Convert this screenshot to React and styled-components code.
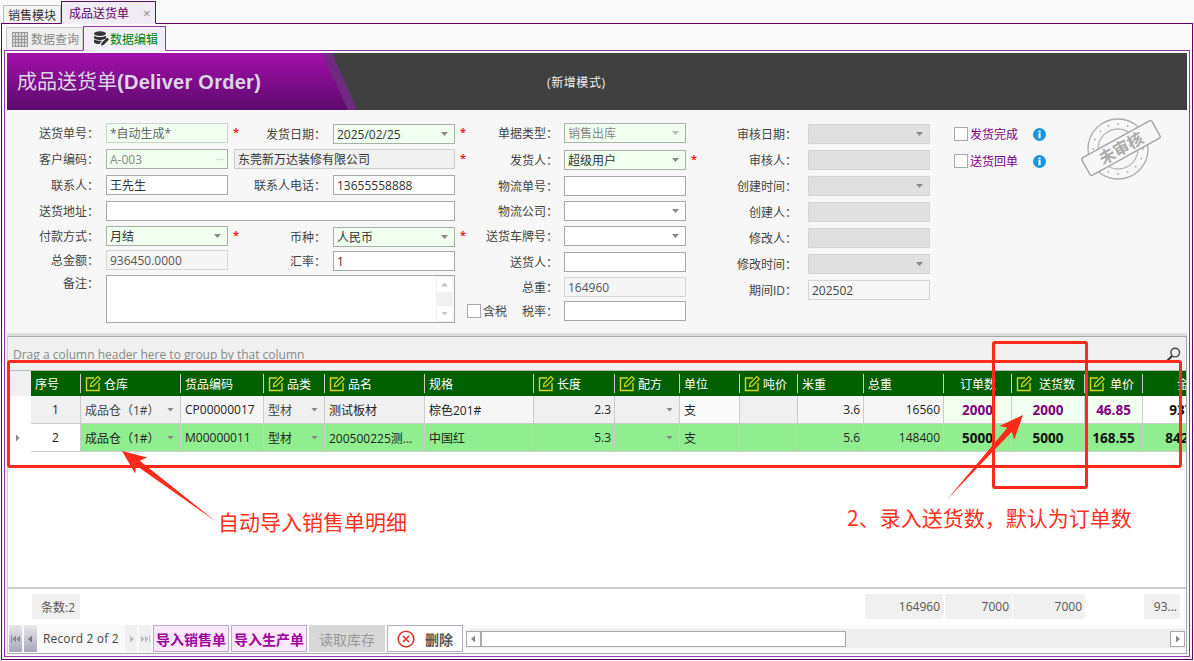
import React from "react";
import styled, { createGlobalStyle, css } from "styled-components";

const FONT = `"Open Sans", "Noto Sans CJK SC", sans-serif`;

const Global = createGlobalStyle`
  html, body { margin: 0; padding: 0; background: #fafafa; }
  body { font-family: ${FONT}; font-size: 12px; color: #333; }
  * { box-sizing: border-box; }
`;

const Page = styled.div`
  position: relative;
  width: 1194px;
  height: 661px;
  overflow: hidden;
  display: flex;
  flex-direction: column;
  background: #fafafa;
`;

const TabStrip = styled.div`
  height: 23px;
  padding-left: 3px;
  display: flex;
  align-items: flex-end;
`;
const TopTab = styled.div`
  height: ${(p) => (p.$active ? 23 : 18)}px;
  width: ${(p) => (p.$active ? 95 : 58)}px;
  padding-left: ${(p) => (p.$active ? 7 : 4)}px;
  display: flex;
  align-items: center;
  color: ${(p) => (p.$active ? "#660066" : "#333")};
  background: ${(p) => (p.$active ? "#f0ecf3" : "#f4f4f4")};
  border: 1px solid ${(p) => (p.$active ? "#5f0f6f" : "#bbb")};
  border-bottom: ${(p) => (p.$active ? "1px solid #f0ecf3" : "0")};
  margin-bottom: ${(p) => (p.$active ? -1 : 0)}px;
  z-index: 1;
`;
const TabClose = styled.span`
  margin-left: 14px;
  color: #888;
  font-size: 13px;
`;
const Outer = styled.div`
  flex: 1;
  margin: 0 1px 1px 1px;
  border: 1px solid #660066;
  padding: 2px 0 2px 0;
  display: flex;
  flex-direction: column;
  min-height: 0;
`;
const SubTabs = styled.div`
  height: 24px;
  padding-left: 2px;
  display: flex;
  align-items: flex-end;
  margin: 0 2px;
`;
const SubTab = styled.div`
  height: ${(p) => (p.$active ? 25 : 23)}px;
  width: ${(p) => (p.$active ? 83 : 77)}px;
  display: flex;
  align-items: center;
  gap: ${(p) => (p.$active ? 1 : 3)}px;
  padding-left: ${(p) => (p.$active ? 9 : 5)}px;
  color: ${(p) => (p.$active ? "#008000" : "#888")};
  background: ${(p) => (p.$active ? "#f2eef6" : "#f0f0f0")};
  border: 1px solid ${(p) => (p.$active ? "#9932b0" : "#ccc")};
  border-bottom: ${(p) => (p.$active ? "1px solid #f2eef6" : "0")};
  margin-bottom: ${(p) => (p.$active ? -1 : 0)}px;
  z-index: 1;
`;
const Inner = styled.div`
  flex: 1;
  margin: 0 2px;
  border: 1px solid #9932b0;
  padding: 2px 2px 2px 2px;
  display: flex;
  flex-direction: column;
  min-height: 0;
`;

const Banner = styled.div`
  height: 57px;
  flex: none;
  background: #404040;
  display: flex;
  align-items: center;
  color: #fff;
`;
const BannerLeft = styled.div`
  position: relative;
  width: 350px;
  height: 100%;
  background: #6e2a80;
  clip-path: polygon(0 0, 325px 0, 350px 100%, 0 100%);
  display: flex;
  align-items: center;
  padding: 0 0 2px 10px;
  &::before {
    content: "";
    position: absolute;
    inset: 0;
    background: linear-gradient(#a30fab, #5c0a6c);
    clip-path: polygon(0 0, 315px 0, 341px 100%, 0 100%);
  }
`;
const BannerTitle = styled.div`
  position: relative;
  color: #dcd6e4;
  font-size: 20px;
  font-weight: 700;
  letter-spacing: 0.27px;
  font-family: "Liberation Sans", "Noto Sans CJK SC", sans-serif;
  white-space: nowrap;
  & > span { font-weight: 400; letter-spacing: 0; }
`;
const BannerMode = styled.div`
  margin-left: 190px;
  font-size: 12px;
  letter-spacing: 0.6px;
  color: #f0f0f0;
`;

const Form = styled.div`
  height: 223px;
  flex: none;
  padding-top: 13px;
  background: #f7f7f7;
  display: flex;
  align-items: flex-start;
`;
const Fields = styled.div`
  display: grid;
  grid-template-columns: ${(p) => p.$cols};
  grid-template-rows: ${(p) => p.$rows};
  margin-top: ${(p) => p.$top || 0}px;
`;
const Label = styled.div`
  height: 20px;
  display: flex;
  align-items: center;
  justify-content: flex-end;
  padding-right: ${(p) => p.$pad ?? 7}px;
  margin-top: ${(p) => p.$dy || 0}px;
  color: #444;
  white-space: nowrap;
`;
const inputVariants = {
  req: css`background: #f0fff0; border-color: #a8b0a8; color: #333;`,
  reqLight: css`background: #f0fff0; border-color: #ccd4cc; color: #666;`,
  reqMuted: css`background: #f0fff0; border-color: #a8b0a8; color: #888;`,
  plain: css`background: #fff; border-color: #a8a8a8; color: #333;`,
  read: css`background: #f5f5f5; border-color: #d4d4d4; color: #555;`,
  name: css`background: #f0f0f0; border-color: #ccc; color: #333;`,
  off: css`background: #e0e0e0; border-color: #d4d4d4; color: #999;`,
  period: css`background: #f7f7f7; border-color: #d4d4d4; color: #444;`,
};
const Input = styled.div`
  height: ${(p) => p.$h || 20}px;
  margin-top: ${(p) => p.$dy || 0}px;
  margin-left: ${(p) => p.$ml || 0}px;
  grid-column: ${(p) => p.$span || "auto"};
  border: 1px solid;
  ${(p) => inputVariants[p.$v || "plain"]}
  padding: 0 3px;
  display: flex;
  align-items: center;
  justify-content: space-between;
  white-space: nowrap;
  overflow: hidden;
`;
const Caret = styled.i`
  width: 7px;
  height: 4px;
  flex: none;
  margin-right: 3px;
  background: ${(p) => (p.$light ? "#bbb" : "#888")};
  clip-path: polygon(0 0, 100% 0, 50% 100%);
`;
const Dots = styled.span`
  color: #bbb;
  font-size: 10px;
  line-height: 1;
`;
const Star = styled.div`
  height: 20px;
  margin-top: ${(p) => p.$dy || 0}px;
  padding-left: 5px;
  color: #ff2020;
  font-weight: 700;
  font-size: 11px;
  line-height: 17px;
`;
const Memo = styled(Input)`
  padding: 0;
  justify-content: flex-end;
  align-items: stretch;
`;
const MemoBar = styled.div`
  width: 17px;
  margin-right: 1px;
  background: #f0f0f0;
  display: flex;
  flex-direction: column;
  justify-content: space-between;
  padding: 1px;
`;
const MemoBtn = styled.div`
  height: 15px;
  background: #fff;
  display: flex;
  align-items: center;
  justify-content: center;
  & > i {
    width: 7px;
    height: 4px;
    background: #c4c4c4;
    clip-path: ${(p) => (p.$up ? "polygon(50% 0, 100% 100%, 0 100%)" : "polygon(0 0, 100% 0, 50% 100%)")};
  }
`;
const TaxCell = styled.div`
  display: flex;
  align-items: center;
  height: 20px;
  padding: 0 6px 0 1px;
  color: #444;
  white-space: nowrap;
`;
const Check = styled.span`
  display: inline-block;
  flex: none;
  width: 14px;
  height: 14px;
  background: #fff;
  border: 1px solid #aaa;
  margin-right: 2px;
`;
const TaxRate = styled.span`
  margin-left: auto;
`;
const Flags = styled.div`
  width: 126px;
  margin-left: 24px;
  padding-top: 3px;
  display: flex;
  flex-direction: column;
`;
const Flag = styled.div`
  height: 27px;
  padding-top: 1px;
  display: flex;
  align-items: flex-start;
  color: #800080;
  line-height: 16px;
  & > svg { margin-left: 15px; margin-top: 1px; }
`;
const StampBox = styled.div`
  margin-top: -6px;
`;

const Splitter = styled.div`
  height: 3px;
  flex: none;
  background: #dcdcdc;
`;
const GridPanel = styled.div`
  flex: 1;
  min-height: 0;
  border: 1px solid #aaa;
  border-left-color: #ccc;
  background: #fff;
  display: flex;
  flex-direction: column;
  overflow: hidden;
`;
const GroupPanel = styled.div`
  height: 34px;
  flex: none;
  background: #f0f0f0;
  border-bottom: 1px solid #bbb;
  padding: 1px 5px 0 5px;
  display: flex;
  align-items: center;
  justify-content: space-between;
  color: #888;
`;
const COLS = "23px 50px 100px 83px 61px 100px 109px 81px 65px 60px 58px 66px 80px 68px 73px 58px 92px";
const GridRow = styled.div`
  display: grid;
  grid-template-columns: ${COLS};
  height: ${(p) => p.$h}px;
  flex: none;
`;
const Corner = styled.div`
  background: #f0f0f0;
`;
const HeadCell = styled.div`
  background: #006000 linear-gradient(#ccc, #ccc) right center / 1px 19px no-repeat;
  color: #fff;
  display: flex;
  align-items: center;
  justify-content: ${(p) => p.$align || "flex-start"};
  gap: ${(p) => p.$gap ?? 2}px;
  padding: 0 4px;
  white-space: nowrap;
`;
const Cell = styled.div`
  background: ${(p) => p.$bg};
  border-right: 1px solid #ccc;
  border-bottom: 1px solid #ccc;
  color: ${(p) => p.$color || "#222"};
  font-size: ${(p) => (p.$strong ? 13.5 : 12)}px;
  font-weight: ${(p) => (p.$strong ? 700 : 400)};
  display: flex;
  align-items: center;
  justify-content: ${(p) => p.$align || "flex-start"};
  padding: 0 ${(p) => (p.$align === "flex-end" ? 3 : 4)}px 0 4px;
  min-width: 0;
  white-space: nowrap;
`;
const CellCaret = styled(Caret)`
  margin-left: auto;
  margin-right: 2px;
`;
const Indicator = styled.div`
  display: flex;
  align-items: center;
  justify-content: center;
  padding-right: 4px;
  & > i {
    width: 4px;
    height: 8px;
    background: #888;
    clip-path: polygon(0 0, 100% 50%, 0 100%);
  }
`;
const GridBody = styled.div`
  flex: 1;
  background: #fff;
`;
const Summary = styled.div`
  height: 38px;
  flex: none;
  border-top: 2px solid #ccc;
  padding-top: 5px;
  display: grid;
  grid-template-columns: 23px 50px 100px 83px 61px 100px 109px 81px 65px 60px 58px 66px 80px 68px 73px 58px 37px;
`;
const SumCell = styled.div`
  height: 25px;
  margin-left: ${(p) => p.$ml ?? 1}px;
  margin-right: ${(p) => p.$mr ?? 1}px;
  background: ${(p) => (p.$on ? "#f0f0f0" : "transparent")};
  color: #555;
  display: flex;
  align-items: center;
  justify-content: ${(p) => (p.$left ? "flex-start" : "flex-end")};
  padding: 0 3px 0 9px;
`;
const Nav = styled.div`
  height: 28px;
  flex: none;
  display: flex;
  align-items: stretch;
  padding: 0 0 1px 1px;
  background: #fafafa;
`;
const NavBtn = styled.div`
  width: ${(p) => (p.$on ? 13 : 12)}px;
  margin-right: 2px;
  background: ${(p) => (p.$on ? "linear-gradient(#e8e8ec, #a8a6bc)" : "#f0f0f0")};
  display: flex;
  align-items: center;
  justify-content: center;
`;
const NavText = styled.div`
  width: 86px;
  padding-left: 4px;
  display: flex;
  align-items: center;
  color: #444;
  letter-spacing: 0.15px;
  white-space: nowrap;
`;
const ActionBtn = styled.div`
  width: 76px;
  margin-right: 2px;
  border: 1px solid ${(p) => (p.$kind === "off" ? "#d8d8d8" : "#b4aecc")};
  background: ${(p) => (p.$kind === "off" ? "#d8d8d8" : p.$kind === "del" ? "#fff" : "#fbe8fb")};
  color: ${(p) => (p.$kind === "off" ? "#999" : p.$kind === "del" ? "#555" : "#a000a0")};
  font-size: 14px;
  font-weight: ${(p) => (p.$kind === "off" ? 400 : 700)};
  display: flex;
  align-items: center;
  justify-content: center;
  gap: 10px;
  white-space: nowrap;
`;
const ScrollBar = styled.div`
  flex: 1;
  margin: 4px 1px 4px 1px;
  background: #eee;
  display: flex;
  align-items: center;
  justify-content: space-between;
`;
const ScrollBtn = styled.div`
  width: 15px;
  height: 16px;
  background: #fff;
  border: 1px solid #aaa;
  display: flex;
  align-items: center;
  justify-content: center;
`;
const ScrollThumb = styled.div`
  width: 365px;
  height: 16px;
  background: #fff;
  border: 1px solid #aaa;
  margin-right: auto;
`;

const RedBox = styled.div`
  position: absolute;
  left: ${(p) => p.$x}px;
  top: ${(p) => p.$y}px;
  width: ${(p) => p.$w}px;
  height: ${(p) => p.$h}px;
  border: 3px solid #ff2a1a;
  border-radius: 3px;
`;
const ArrowLayer = styled.svg`
  position: absolute;
  inset: 0;
  pointer-events: none;
`;
const Note = styled.div`
  position: absolute;
  left: ${(p) => p.$x}px;
  top: ${(p) => p.$y}px;
  color: #ff3020;
  font-size: 21px;
  line-height: 28px;
  white-space: nowrap;
  font-family: "Noto Sans CJK SC", sans-serif;
`;

const Tri = ({ dir = "r", color = "#888", bar }) => (
  <svg width="9" height="8" viewBox="0 0 9 8">
    {bar && <rect x={dir === "l" ? 0 : 8} y="0.5" width="1" height="7" fill={color} />}
    <path d={dir === "l" ? "M6 0.5V7.5L2 4z" : "M3 0.5V7.5L7 4z"} fill={color} />
  </svg>
);
const DoubleTri = ({ dir, color }) => (
  <svg width="10" height="8" viewBox="0 0 10 8">
    {dir === "l" ? (
      <path d="M0 0.5h1v7H0zM5 0.5V7.5L1.5 4zM9 0.5V7.5L5.5 4z" fill={color} />
    ) : (
      <path d="M1 0.5V7.5L4.5 4zM5 0.5V7.5L8.5 4zM9 0.5h1v7H9z" fill={color} />
    )}
  </svg>
);

const EditIcon = () => (
  <svg width="17" height="17" viewBox="0 0 17 17" fill="none" style={{ flex: "none" }}>
    <path d="M9 3H1.5V15.5H14V8" stroke="#d6d61e" strokeWidth="1.4" />
    <path d="M5.5 11.5L6 8.5L12.8 1.7L15.2 4.1L8.4 10.9Z" stroke="#d6d61e" strokeWidth="1.2" fill="#006000" />
  </svg>
);
const TableIcon = () => (
  <svg width="16" height="15" viewBox="0 0 16 15">
    <rect x="0.5" y="0.5" width="15" height="14" fill="#d8d8d8" stroke="#999" />
    <path d="M0.5 4.5h15M0.5 7.5h15M0.5 10.5h15M3.5 1v13M6.5 1v13M9.5 1v13M12.5 1v13" stroke="#999" fill="none" />
  </svg>
);
const DbIcon = () => (
  <svg width="16" height="16" viewBox="0 0 16 16">
    <ellipse cx="7" cy="2.6" rx="6" ry="2.4" fill="#333" />
    <path d="M1 4v2.5C1 8 3.7 9 7 9s6-1 6-2.5V4C13 5.4 10.3 6 7 6S1 5.4 1 4z" fill="#333" />
    <path d="M1 8.3v2.4C1 12.2 3.7 13 6.5 13l2.5-3.6C5.5 10 2 9.6 1 8.3z" fill="#333" />
    <path d="M8 14.5l.5-2.6L14 6.5l2 2-5.5 5.4z" fill="#333" />
  </svg>
);
const InfoIcon = () => (
  <svg width="13" height="13" viewBox="0 0 13 13">
    <circle cx="6.5" cy="6.5" r="6.5" fill="#1a96e0" />
    <rect x="5.4" y="5.2" width="2.2" height="5" fill="#fff" />
    <rect x="5.4" y="2.6" width="2.2" height="1.8" fill="#fff" />
  </svg>
);
const SearchIcon = () => (
  <svg width="15" height="15" viewBox="0 0 15 15" fill="none">
    <circle cx="9.2" cy="5.6" r="4.3" stroke="#444" strokeWidth="1.4" />
    <path d="M6 9L1 14" stroke="#333" strokeWidth="2" />
  </svg>
);
const DeleteIcon = () => (
  <svg width="18" height="18" viewBox="0 0 18 18" fill="none" style={{ flex: "none" }}>
    <circle cx="9" cy="9" r="7.8" stroke="#e0342a" strokeWidth="1.6" fill="#fff" />
    <path d="M6 6l6 6M12 6l-6 6" stroke="#e0342a" strokeWidth="1.6" />
  </svg>
);
const Stamp = () => {
  const dots = [];
  for (let i = 0; i < 16; i++) {
    const a = (i / 16) * Math.PI * 2;
    dots.push(<circle key={i} cx={38 + 25 * Math.cos(a)} cy={32 + 25 * Math.sin(a)} r="0.9" fill="#a8a8a8" />);
  }
  return (
    <svg width="82" height="64" viewBox="0 0 82 64" fill="none">
      <circle cx="38" cy="32" r="30" stroke="#adadad" strokeWidth="1.3" />
      <circle cx="38" cy="32" r="20" stroke="#b8b8b8" strokeWidth="1.3" />
      {dots}
      <g transform="rotate(-29 41 31)">
        <rect x="1" y="21" width="80" height="20" rx="2" fill="#f7f7f7" stroke="#a4a4a4" strokeWidth="1.4" />
        <text x="41" y="37" textAnchor="middle" fontSize="16" fontWeight="700" fill="#aaa" fontFamily="Noto Sans CJK SC, sans-serif">未审核</text>
      </g>
    </svg>
  );
};

const Arrow = ({ x1, y1, x2, y2 }) => {
  const len = Math.hypot(x2 - x1, y2 - y1);
  const ux = (x2 - x1) / len;
  const uy = (y2 - y1) / len;
  const nx = -uy;
  const ny = ux;
  const at = (d, w) => `${x2 - ux * d + nx * w},${y2 - uy * d + ny * w}`;
  const pts = [at(0, 0), at(24, 10), at(20, 3), at(len, 0.3), at(20, -3), at(24, -10)].join(" ");
  return <polygon points={pts} fill="#ff2a1a" />;
};

const columns = [
  { key: "no", title: "序号", align: "center" },
  { key: "wh", title: "仓库", edit: true, caret: true },
  { key: "code", title: "货品编码" },
  { key: "type", title: "品类", edit: true, caret: true },
  { key: "name", title: "品名", edit: true },
  { key: "spec", title: "规格" },
  { key: "len", title: "长度", edit: true, right: true },
  { key: "recipe", title: "配方", edit: true, caret: true },
  { key: "unit", title: "单位" },
  { key: "price", title: "吨价", edit: true },
  { key: "mw", title: "米重", right: true },
  { key: "tw", title: "总重", right: true },
  { key: "ord", title: "订单数", align: "center", headAlign: "center", strong: true },
  { key: "dlv", title: "送货数", edit: true, align: "center", strong: true, gap: 6 },
  { key: "up", title: "单价", edit: true, align: "center", strong: true, gap: 4 },
  { key: "amt", title: "金额", align: "center", headAlign: "center", strong: true },
];

const rows = [
  {
    no: "1", wh: "成品仓（1#）", code: "CP00000017", type: "型材", name: "测试板材", spec: "棕色201#",
    len: "2.3", recipe: "", unit: "支", price: "", mw: "3.6", tw: "16560", ord: "2000", dlv: "2000", up: "46.85", amt: "93700",
  },
  {
    no: "2", wh: "成品仓（1#）", code: "M00000011", type: "型材", name: "200500225测...", spec: "中国红",
    len: "5.3", recipe: "", unit: "支", price: "", mw: "5.6", tw: "148400", ord: "5000", dlv: "5000", up: "168.55", amt: "842750",
  },
];
const firstRowBg = {
  no: "#f0f0f0", wh: "#f0f0f0", code: "#f6f6f6", type: "#f0f0f0", name: "#f0f0f0", spec: "#f6f6f6",
  len: "#f0f0f0", recipe: "#f0f0f0", unit: "#fafafa", price: "#f0f0f0", mw: "#f6f6f6", tw: "#f6f6f6",
  ord: "#f0fff0", dlv: "#f0fff0", up: "#f0fff0", amt: "#fff",
};
const summary = [
  { on: true, text: "条数:2", left: true },
  null, null, null, null, null, null, null, null, null, null,
  { on: true, text: "164960", ml: 1, mr: 1 },
  { on: true, text: "7000", ml: 1, mr: 0 },
  { on: true, text: "7000", ml: 1, mr: 0 },
  null,
  { on: true, text: "93...", ml: 1, mr: 0 },
];

export default function App() {
  return (
    <Page>
      <Global />
      <TabStrip>
        <TopTab>销售模块</TopTab>
        <TopTab $active>
          成品送货单<TabClose>×</TabClose>
        </TopTab>
      </TabStrip>
      <Outer>
        <SubTabs>
          <SubTab>
            <TableIcon />
            数据查询
          </SubTab>
          <SubTab $active>
            <DbIcon />
            数据编辑
          </SubTab>
        </SubTabs>
        <Inner>
          <Banner>
            <BannerLeft>
              <BannerTitle>
                <span>成品送货单</span>(Deliver Order)
              </BannerTitle>
            </BannerLeft>
            <BannerMode>(新增模式)</BannerMode>
          </Banner>

          <Form>
            <Fields $cols="99px 122px 13px 92px 122px 11px" $rows="26px 26px 26px 25px 24px 25px 48px">
              <Label>送货单号：</Label>
              <Input $v="reqLight">*自动生成*</Input>
              <Star>*</Star>
              <Label $dy={1}>发货日期：</Label>
              <Input $v="req" $dy={1}>2025/02/25<Caret /></Input>
              <Star>*</Star>

              <Label>客户编码：</Label>
              <Input $v="reqMuted">A-003<Dots>···</Dots></Input>
              <Input $v="name" $span="3 / 6" $ml={6}>东莞新万达装修有限公司</Input>
              <Star>*</Star>

              <Label>联系人：</Label>
              <Input>王先生</Input>
              <span />
              <Label>联系人电话：</Label>
              <Input>13655558888</Input>
              <span />

              <Label>送货地址：</Label>
              <Input $span="2 / 6" />
              <span />

              <Label>付款方式：</Label>
              <Input $v="req">月结<Caret /></Input>
              <Star>*</Star>
              <Label $dy={1}>币种：</Label>
              <Input $v="req" $dy={1}>人民币<Caret /></Input>
              <Star>*</Star>

              <Label>总金额：</Label>
              <Input $v="read">936450.0000</Input>
              <span />
              <Label $dy={1}>汇率：</Label>
              <Input $dy={1}>1</Input>
              <span />

              <Label $dy={-2}>备注：</Label>
              <Memo $span="2 / 6" $h={48}>
                <MemoBar>
                  <MemoBtn $up><i /></MemoBtn>
                  <MemoBtn><i /></MemoBtn>
                </MemoBar>
              </Memo>
              <span />
            </Fields>

            <Fields $cols="98px 122px 12px" $rows="27px 26px 25px 25px 26px 25px 24px 20px">
              <Label $pad={6}>单据类型：</Label>
              <Input $v="reqMuted">销售出库<Caret $light /></Input>
              <span />
              <Label $pad={6}>发货人：</Label>
              <Input $v="req">超级用户<Caret /></Input>
              <Star>*</Star>
              <Label $pad={6}>物流单号：</Label>
              <Input />
              <span />
              <Label $pad={6}>物流公司：</Label>
              <Input><span /><Caret /></Input>
              <span />
              <Label $pad={6}>送货车牌号：</Label>
              <Input><span /><Caret /></Input>
              <span />
              <Label $pad={6}>送货人：</Label>
              <Input />
              <span />
              <Label $pad={6}>总重：</Label>
              <Input $v="read">164960</Input>
              <span />
              <TaxCell>
                <Check />含税<TaxRate>税率：</TaxRate>
              </TaxCell>
              <Input />
              <span />
            </Fields>

            <Fields $cols="110px 122px" $rows="26px 26px 26px 26px 26px 26px 26px" $top={1}>
              <Label $pad={11}>审核日期：</Label>
              <Input $v="off"><span /><Caret /></Input>
              <Label $pad={11}>审核人：</Label>
              <Input $v="off" />
              <Label $pad={11}>创建时间：</Label>
              <Input $v="off"><span /><Caret /></Input>
              <Label $pad={11}>创建人：</Label>
              <Input $v="off" />
              <Label $pad={11}>修改人：</Label>
              <Input $v="off" />
              <Label $pad={11}>修改时间：</Label>
              <Input $v="off"><span /><Caret /></Input>
              <Label $pad={11}>期间ID：</Label>
              <Input $v="period">202502</Input>
            </Fields>

            <Flags>
              <Flag><Check />发货完成<InfoIcon /></Flag>
              <Flag><Check />送货回单<InfoIcon /></Flag>
            </Flags>
            <StampBox><Stamp /></StampBox>
          </Form>

          <Splitter />

          <GridPanel>
            <GroupPanel>
              Drag a column header here to group by that column
              <SearchIcon />
            </GroupPanel>
            <GridRow $h={25}>
              <Corner />
              {columns.map((c) => (
                <HeadCell key={c.key} $align={c.headAlign} $gap={c.gap}>
                  {c.edit && <EditIcon />}
                  {c.title}
                </HeadCell>
              ))}
            </GridRow>
            {rows.map((r, i) => (
              <GridRow key={r.no} $h={28}>
                <Indicator>{i === 1 && <i />}</Indicator>
                {columns.map((c) => (
                  <Cell
                    key={c.key}
                    $bg={i === 0 ? firstRowBg[c.key] : c.key === "no" ? "#fff" : "#90ee90"}
                    $align={c.align || (c.right ? "flex-end" : undefined)}
                    $strong={c.strong}
                    $color={c.strong ? (i === 0 && c.key !== "amt" ? "#800080" : "#111") : i === 0 && c.caret ? "#444" : "#222"}
                  >
                    {r[c.key]}
                    {c.caret && <CellCaret />}
                  </Cell>
                ))}
              </GridRow>
            ))}
            <GridBody />
            <Summary>
              <span />
              {summary.map((s, i) =>
                s ? (
                  <SumCell key={i} $on={s.on} $left={s.left} $ml={s.ml} $mr={s.mr}>
                    {s.text}
                  </SumCell>
                ) : (
                  <span key={i} />
                )
              )}
            </Summary>
            <Nav>
              <NavBtn $on><DoubleTri dir="l" color="#888" /></NavBtn>
              <NavBtn $on><Tri dir="l" color="#777" /></NavBtn>
              <NavText>Record 2 of 2</NavText>
              <NavBtn><Tri color="#bbb" /></NavBtn>
              <NavBtn><DoubleTri color="#bbb" /></NavBtn>
              <ActionBtn $kind="act">导入销售单</ActionBtn>
              <ActionBtn $kind="act">导入生产单</ActionBtn>
              <ActionBtn $kind="off">读取库存</ActionBtn>
              <ActionBtn $kind="del"><DeleteIcon />删除</ActionBtn>
              <ScrollBar>
                <ScrollBtn><Tri dir="l" color="#888" /></ScrollBtn>
                <ScrollThumb />
                <ScrollBtn><Tri color="#888" /></ScrollBtn>
              </ScrollBar>
            </Nav>
          </GridPanel>
        </Inner>
      </Outer>

      <RedBox $x={7} $y={360} $w={1175} $h={108} />
      <RedBox $x={992} $y={341} $w={96} $h={148} />
      <ArrowLayer width="1194" height="661">
        <Arrow x1={216} y1={522} x2={122} y2={451} />
        <Arrow x1={947} y1={499} x2={1023} y2={415} />
      </ArrowLayer>
      <Note $x={218} $y={507}>自动导入销售单明细</Note>
      <Note $x={847} $y={503}>2、录入送货数，默认为订单数</Note>
    </Page>
  );
}
